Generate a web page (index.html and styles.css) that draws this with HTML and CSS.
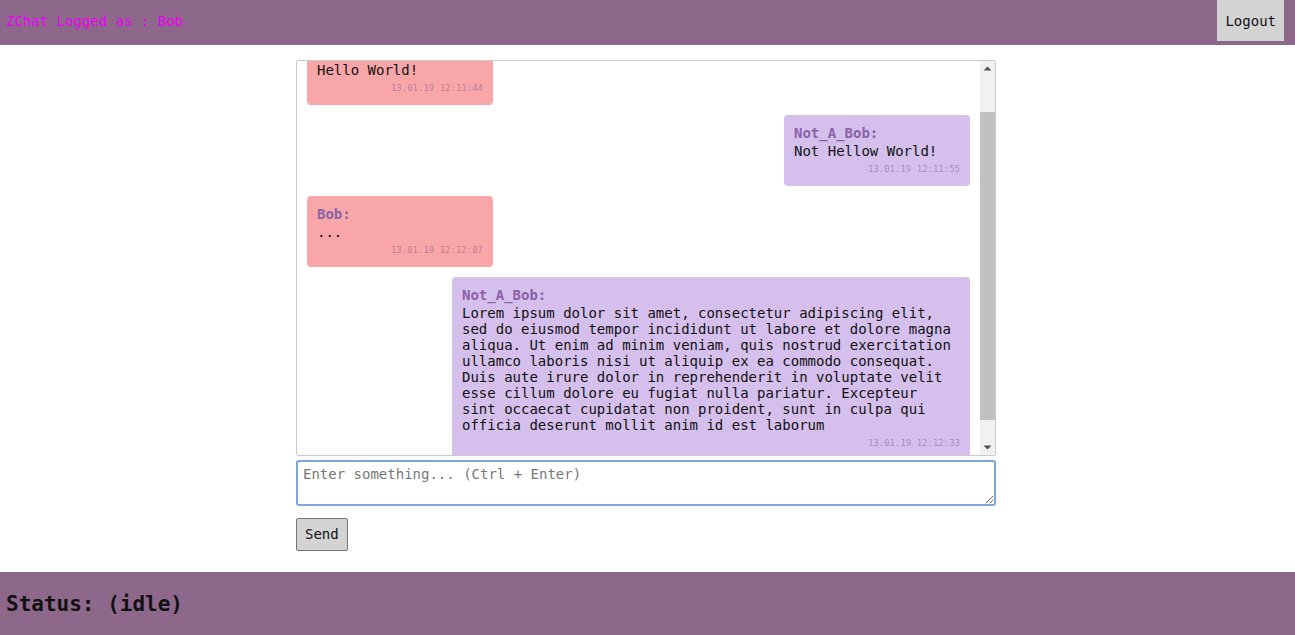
FILE: index.html
```html
<!DOCTYPE html>
<html lang="en">
<head>
<meta charset="utf-8">
<title>ZChat</title>
<link rel="stylesheet" href="styles.css">
</head>
<body>
<div class="page">
  <header class="topbar">
    <div class="title">ZChat Logged as : Bob</div>
    <button class="logout">Logout</button>
  </header>
  <main class="main">
    <div class="chat">
      <div class="viewport" id="chat">
        <div class="list">
          <div class="msg mine">
            <div class="name">Bob:</div>
            <div class="text">Hello World!</div>
            <div class="time">13.01.19 12:11:44</div>
          </div>
          <div class="msg theirs">
            <div class="name">Not_A_Bob:</div>
            <div class="text">Not Hellow World!</div>
            <div class="time">13.01.19 12:11:55</div>
          </div>
          <div class="msg mine">
            <div class="name">Bob:</div>
            <div class="text">...</div>
            <div class="time">13.01.19 12:12:07</div>
          </div>
          <div class="msg theirs">
            <div class="name">Not_A_Bob:</div>
            <div class="text">Lorem ipsum dolor sit amet, consectetur adipiscing elit, sed do eiusmod tempor incididunt ut labore et dolore magna aliqua. Ut enim ad minim veniam, quis nostrud exercitation ullamco laboris nisi ut aliquip ex ea commodo consequat. Duis aute irure dolor in reprehenderit in voluptate velit esse cillum dolore eu fugiat nulla pariatur. Excepteur sint occaecat cupidatat non proident, sunt in culpa qui officia deserunt mollit anim id est laborum</div>
            <div class="time">13.01.19 12:12:33</div>
          </div>
        </div>
      </div>
      <div class="scrollbar">
        <div class="sb-btn">
          <svg width="15" height="15" viewBox="0 0 15 15"><path d="M3.5 9.5 L7.5 5.5 L11.5 9.5 Z" fill="#505050"/></svg>
        </div>
        <div class="sb-track"><div class="sb-thumb"></div></div>
        <div class="sb-btn">
          <svg width="15" height="15" viewBox="0 0 15 15"><path d="M3.5 5.5 L7.5 9.5 L11.5 5.5 Z" fill="#505050"/></svg>
        </div>
      </div>
    </div>
    <textarea class="input" id="input" placeholder="Enter something... (Ctrl + Enter)" autofocus></textarea>
    <div class="actions">
      <button class="send">Send</button>
    </div>
  </main>
  <footer class="status">Status: (idle)</footer>
</div>
<script src="script.js"></script>
</body>
</html>
```
FILE: styles.css
```css
html, body {
  margin: 0;
  padding: 0;
  height: 100%;
}
body {
  font-family: "DejaVu Sans Mono", "Liberation Mono", monospace;
  font-size: 14px;
  color: #111;
  background: #fff;
}
.page {
  display: flex;
  flex-direction: column;
  height: 100vh;
}
.topbar {
  height: 45px;
  flex: 0 0 45px;
  background: #8e688b;
  display: flex;
  justify-content: space-between;
  align-items: flex-start;
  padding: 0 11px 0 6px;
  box-sizing: border-box;
}
.title {
  color: #e800f4;
  line-height: 42px;
  font-size: 14px;
}
.logout {
  height: 41px;
  padding: 0 8px;
  border: none;
  background: #d3d3d3;
  color: #111;
  font-family: inherit;
  font-size: 14px;
  margin: 0;
}
.main {
  flex: 1 1 auto;
  display: flex;
  flex-direction: column;
  align-items: center;
  padding-top: 15px;
  padding-right: 3px;
}
.chat {
  width: 700px;
  height: 396px;
  box-sizing: border-box;
  border: 1px solid #cbcbcb;
  border-radius: 2px;
  display: flex;
}
.viewport {
  flex: 1 1 auto;
  overflow: hidden;
}
.scrollbar {
  flex: 0 0 15px;
  width: 15px;
  display: flex;
  flex-direction: column;
  background: #f1f1f1;
}
.sb-btn {
  height: 15px;
  flex: 0 0 15px;
}
.sb-btn svg {
  display: block;
}
.sb-track {
  flex: 1 1 auto;
  padding-top: 36px;
}
.sb-thumb {
  height: 308px;
  background: #c1c1c1;
}
.list {
  display: flex;
  flex-direction: column;
  gap: 10px;
  padding: 20px 10px 25px 10px;
}
.msg {
  padding: 10px 12px 10px 10px;
  border-radius: 4px;
  min-width: 164px;
  max-width: 496px;
}
.mine {
  align-self: flex-start;
  background: #f9a6a8;
}
.theirs {
  align-self: flex-end;
  background: #d5bfed;
}
.name {
  font-weight: bold;
  color: #8a62a6;
  line-height: 16px;
  margin-bottom: 2px;
}
.text {
  line-height: 16px;
  white-space: pre-wrap;
}
.time {
  margin-top: 4px;
  margin-right: -2px;
  font-size: 9px;
  line-height: 13px;
  text-align: right;
  color: rgba(105, 75, 130, 0.45);
}
.input {
  width: 700px;
  height: 46px;
  box-sizing: border-box;
  margin-top: 4px;
  border: 2px solid #7aa6db;
  border-radius: 3px;
  padding: 4px 5px;
  font-family: inherit;
  font-size: 14px;
  line-height: 16px;
  outline: none;
  resize: vertical;
  caret-color: #111;
}
.input::placeholder {
  color: #777;
}
.actions {
  width: 700px;
  margin-top: 12px;
  display: flex;
}
.send {
  padding: 7px 8px;
  line-height: 17px;
  font-family: inherit;
  font-size: 14px;
  background: #d3d3d3;
  border: 1px solid #777;
  border-radius: 2px;
  color: #111;
}
.status {
  flex: 0 0 63px;
  height: 63px;
  background: #8e688b;
  display: flex;
  align-items: center;
  padding-left: 6px;
  font-size: 21px;
  font-weight: bold;
  color: #111;
}
```
FILE: script.js
```js
document.getElementById('chat').scrollTop = 47;
document.getElementById('input').focus();
```
